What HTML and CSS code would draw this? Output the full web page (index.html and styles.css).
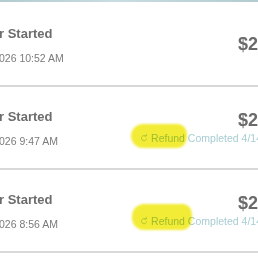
FILE: index.html
```html
<!DOCTYPE html>
<html>
<head>
<meta charset="utf-8">
<link rel="stylesheet" href="styles.css">
</head>
<body>
<div class="screen">
  <div class="topline"></div>
  <ul class="list">
    <li class="row">
      <div class="left">
        <div class="title">r Started</div>
        <div class="date">026 10:52 AM</div>
      </div>
      <div class="right">
        <div class="amount">$2</div>
      </div>
    </li>
    <li class="row">
      <div class="left">
        <div class="title">r Started</div>
        <div class="date">026 9:47 AM</div>
      </div>
      <div class="right">
        <div class="amount">$2</div>
        <div class="refund">
          <svg class="ricon" viewBox="0 0 10 10" width="8" height="8"><path d="M7.5 3.2A3.2 3.2 0 1 0 8.2 5.6" fill="none" stroke="currentColor" stroke-width="1.2"/><path d="M5.6 2.4h2.4V0" fill="none" stroke="currentColor" stroke-width="1.2"/></svg>
          <span>Refund Completed 4/14</span>
          <span class="mark mark-a"></span>
        </div>
      </div>
    </li>
    <li class="row">
      <div class="left">
        <div class="title">r Started</div>
        <div class="date">026 8:56 AM</div>
      </div>
      <div class="right">
        <div class="amount">$2</div>
        <div class="refund">
          <svg class="ricon" viewBox="0 0 10 10" width="8" height="8"><path d="M7.5 3.2A3.2 3.2 0 1 0 8.2 5.6" fill="none" stroke="currentColor" stroke-width="1.2"/><path d="M5.6 2.4h2.4V0" fill="none" stroke="currentColor" stroke-width="1.2"/></svg>
          <span>Refund Completed 4/14</span>
          <span class="mark mark-b"></span>
        </div>
      </div>
    </li>
  </ul>
</div>
</body>
</html>
```
FILE: styles.css
```css
html, body {
  margin: 0;
  padding: 0;
  background: #ffffff;
}
body {
  width: 258px;
  height: 258px;
  overflow: hidden;
  font-family: "Liberation Sans", Arial, sans-serif;
}
.screen {
  width: 258px;
  height: 258px;
  overflow: hidden;
}
.topline {
  height: 2px;
  background: linear-gradient(90deg, #b3cbd0 0%, #c9dcdf 45%, #b3cbd0 100%);
  margin-bottom: 2px;
}
.list {
  list-style: none;
  margin: 0 -4px 0 -1px;
  padding: 0;
}
.row {
  height: 81px;
  border-bottom: 2px solid #d8d8d8;
  display: flex;
  align-items: center;
  justify-content: space-between;
}
.left {
  display: flex;
  flex-direction: column;
  gap: 11px;
}
.title {
  font-size: 13px;
  font-weight: bold;
  color: #6d6d6d;
  line-height: 15px;
}
.date {
  font-size: 10.5px;
  color: #7b7b7b;
  line-height: 12px;
}
.right {
  display: flex;
  flex-direction: column;
  align-items: flex-end;
  gap: 2px;
}
.amount {
  font-size: 18px;
  font-weight: bold;
  color: #6a6a6a;
  line-height: 19px;
  margin-right: 4px;
}
.refund {
  position: relative;
  display: flex;
  align-items: center;
  gap: 3px;
  font-size: 10.5px;
  line-height: 12px;
  color: #a8cdd3;
  white-space: nowrap;
}
.ricon {
  color: #b9d6da;
}
.mark {
  position: absolute;
  background: #f3ec36;
  mix-blend-mode: multiply;
  filter: blur(1px);
}
.mark-a {
  left: -9px;
  top: -8px;
  width: 56px;
  height: 24px;
  border-radius: 12px 9px 10px 12px / 12px 10px 11px 12px;
}
.mark-b {
  left: -8px;
  top: -11px;
  width: 60px;
  height: 26px;
  border-radius: 12px 9px 10px 12px / 12px 10px 11px 12px;
}
```
